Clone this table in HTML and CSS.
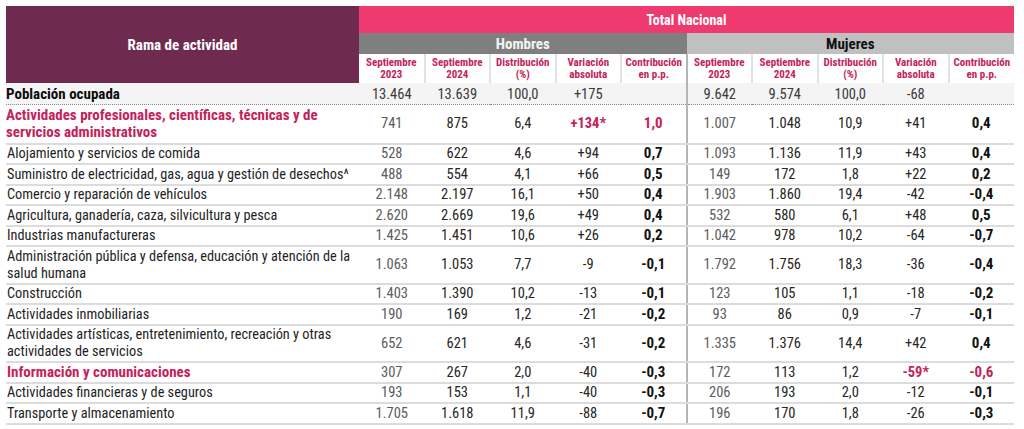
FILE: index.html
```html
<!DOCTYPE html>
<html lang="es">
<head>
<meta charset="utf-8">
<title>Población ocupada por rama de actividad</title>
<link rel="stylesheet" href="styles.css">
</head>
<body>
<table class="tabla">
  <colgroup>
    <col class="c-rama">
    <col class="c-num"><col class="c-num"><col class="c-num"><col class="c-num"><col class="c-num">
    <col class="c-num"><col class="c-num"><col class="c-num"><col class="c-num"><col class="c-num">
  </colgroup>
  <thead>
    <tr class="h-total">
      <th class="rama" rowspan="3">Rama de actividad</th>
      <th class="total" colspan="10">Total Nacional</th>
    </tr>
    <tr class="h-sexo">
      <th class="hombres" colspan="5">Hombres</th>
      <th class="mujeres" colspan="5">Mujeres</th>
    </tr>
    <tr class="h-sub">
      <th>Septiembre<br>2023</th>
      <th>Septiembre<br>2024</th>
      <th>Distribución<br>(%)</th>
      <th>Variación<br>absoluta</th>
      <th>Contribución<br>en p.p.</th>
      <th class="sep">Septiembre<br>2023</th>
      <th>Septiembre<br>2024</th>
      <th>Distribución<br>(%)</th>
      <th>Variación<br>absoluta</th>
      <th>Contribución<br>en p.p.</th>
    </tr>
  </thead>
  <tbody>
    <tr class="r-total">
      <td class="lbl">Población ocupada</td>
      <td class="y1">13.464</td><td>13.639</td><td>100,0</td><td>+175</td><td></td>
      <td class="y1 sep">9.642</td><td>9.574</td><td>100,0</td><td>-68</td><td></td>
    </tr>
    <tr class="hl r-first">
      <td class="lbl">Actividades profesionales, científicas, técnicas y de<br>servicios administrativos</td>
      <td class="y1">741</td><td>875</td><td>6,4</td><td class="hot">+134*</td><td class="pp hot">1,0</td>
      <td class="y1 sep">1.007</td><td>1.048</td><td>10,9</td><td>+41</td><td class="pp">0,4</td>
    </tr>
    <tr>
      <td class="lbl">Alojamiento y servicios de comida</td>
      <td class="y1">528</td><td>622</td><td>4,6</td><td>+94</td><td class="pp">0,7</td>
      <td class="y1 sep">1.093</td><td>1.136</td><td>11,9</td><td>+43</td><td class="pp">0,4</td>
    </tr>
    <tr>
      <td class="lbl">Suministro de electricidad, gas, agua y gestión de desechos^</td>
      <td class="y1">488</td><td>554</td><td>4,1</td><td>+66</td><td class="pp">0,5</td>
      <td class="y1 sep">149</td><td>172</td><td>1,8</td><td>+22</td><td class="pp">0,2</td>
    </tr>
    <tr>
      <td class="lbl">Comercio y reparación de vehículos</td>
      <td class="y1">2.148</td><td>2.197</td><td>16,1</td><td>+50</td><td class="pp">0,4</td>
      <td class="y1 sep">1.903</td><td>1.860</td><td>19,4</td><td>-42</td><td class="pp">-0,4</td>
    </tr>
    <tr>
      <td class="lbl">Agricultura, ganadería, caza, silvicultura y pesca</td>
      <td class="y1">2.620</td><td>2.669</td><td>19,6</td><td>+49</td><td class="pp">0,4</td>
      <td class="y1 sep">532</td><td>580</td><td>6,1</td><td>+48</td><td class="pp">0,5</td>
    </tr>
    <tr>
      <td class="lbl">Industrias manufactureras</td>
      <td class="y1">1.425</td><td>1.451</td><td>10,6</td><td>+26</td><td class="pp">0,2</td>
      <td class="y1 sep">1.042</td><td>978</td><td>10,2</td><td>-64</td><td class="pp">-0,7</td>
    </tr>
    <tr>
      <td class="lbl">Administración pública y defensa, educación y atención de la<br>salud humana</td>
      <td class="y1">1.063</td><td>1.053</td><td>7,7</td><td>-9</td><td class="pp">-0,1</td>
      <td class="y1 sep">1.792</td><td>1.756</td><td>18,3</td><td>-36</td><td class="pp">-0,4</td>
    </tr>
    <tr>
      <td class="lbl">Construcción</td>
      <td class="y1">1.403</td><td>1.390</td><td>10,2</td><td>-13</td><td class="pp">-0,1</td>
      <td class="y1 sep">123</td><td>105</td><td>1,1</td><td>-18</td><td class="pp">-0,2</td>
    </tr>
    <tr>
      <td class="lbl">Actividades inmobiliarias</td>
      <td class="y1">190</td><td>169</td><td>1,2</td><td>-21</td><td class="pp">-0,2</td>
      <td class="y1 sep">93</td><td>86</td><td>0,9</td><td>-7</td><td class="pp">-0,1</td>
    </tr>
    <tr>
      <td class="lbl">Actividades artísticas, entretenimiento, recreación y otras<br>actividades de servicios</td>
      <td class="y1">652</td><td>621</td><td>4,6</td><td>-31</td><td class="pp">-0,2</td>
      <td class="y1 sep">1.335</td><td>1.376</td><td>14,4</td><td>+42</td><td class="pp">0,4</td>
    </tr>
    <tr class="hl">
      <td class="lbl">Información y comunicaciones</td>
      <td class="y1">307</td><td>267</td><td>2,0</td><td>-40</td><td class="pp">-0,3</td>
      <td class="y1 sep">172</td><td>113</td><td>1,2</td><td class="hot">-59*</td><td class="pp hot">-0,6</td>
    </tr>
    <tr>
      <td class="lbl">Actividades financieras y de seguros</td>
      <td class="y1">193</td><td>153</td><td>1,1</td><td>-40</td><td class="pp">-0,3</td>
      <td class="y1 sep">206</td><td>193</td><td>2,0</td><td>-12</td><td class="pp">-0,1</td>
    </tr>
    <tr>
      <td class="lbl">Transporte y almacenamiento</td>
      <td class="y1">1.705</td><td>1.618</td><td>11,9</td><td>-88</td><td class="pp">-0,7</td>
      <td class="y1 sep">196</td><td>170</td><td>1,8</td><td>-26</td><td class="pp">-0,3</td>
    </tr>
  </tbody>
</table>
</body>
</html>
```
FILE: styles.css
```css
html, body {
  margin: 0;
  background: #ffffff;
}
body {
  padding: 6px;
  font-family: "Roboto Condensed", "DejaVu Sans Condensed", sans-serif;
  font-stretch: condensed;
  color: #1e1e1e;
}
.tabla {
  border-collapse: collapse;
  table-layout: fixed;
  width: 1008px;
}
.c-rama { width: 353px; }
.c-num { width: 65.5px; }

.tabla thead th {
  padding: 0;
}

.rama {
  background: #6e2a4f;
  color: #ffffff;
  font-size: 15px;
  font-weight: bold;
  text-align: center;
  vertical-align: middle;
}
.h-total th.total {
  background: #ee3a6e;
  color: #ffffff;
  font-size: 14px;
  font-weight: bold;
  height: 27px;
  text-align: center;
}
.h-sexo th {
  height: 21px;
  font-size: 15px;
  font-weight: bold;
  text-align: center;
}
.h-sexo .hombres {
  background: #7f7f7f;
  color: #f4f4f4;
}
.h-sexo .mujeres {
  background: #c0c0c0;
  color: #111111;
}
.h-sub th {
  height: 29px;
  font-size: 11px;
  line-height: 11.5px;
  font-weight: bold;
  color: #c4225a;
  text-align: center;
  background: #ffffff;
  border-left: 2px solid #e2e2e2;
}
.h-sub th:first-child {
  border-left: none;
}
.h-sub th.sep {
  border-left: 2px solid #b5b5b5;
}

.tabla tbody td {
  font-size: 14.5px;
  line-height: 17px;
  text-align: center;
  padding: 0.75px 0;
  border-bottom: 2px solid #dcdcdc;
  color: #262626;
  vertical-align: middle;
}
.tabla tbody td.lbl {
  text-align: left;
  padding-left: 1px;
  font-size: 14.3px;
  color: #1e1e1e;
}
.tabla tbody td.y1 {
  color: #5c5c5c;
}
.tabla tbody td.sep {
  border-left: 2px solid #b5b5b5;
}
.tabla tbody td.pp {
  font-weight: bold;
  font-size: 15px;
  color: #111111;
}
.tabla tbody .hl td.lbl {
  font-weight: bold;
  font-size: 15px;
  color: #c4225a;
}
.tabla tbody td.hot {
  font-weight: bold;
  color: #c4225a;
}
.tabla tbody .r-first td {
  padding: 1.75px 0;
}

.tabla tbody .r-total td {
  background: #f4f4f4;
  border-bottom: 1px dotted #8c8c8c;
  padding: 2.5px 0 1.5px;
  color: #3a3a3a;
}
.tabla tbody .r-total td.lbl {
  font-weight: bold;
  font-size: 15px;
  color: #0d0d0d;
}
```
